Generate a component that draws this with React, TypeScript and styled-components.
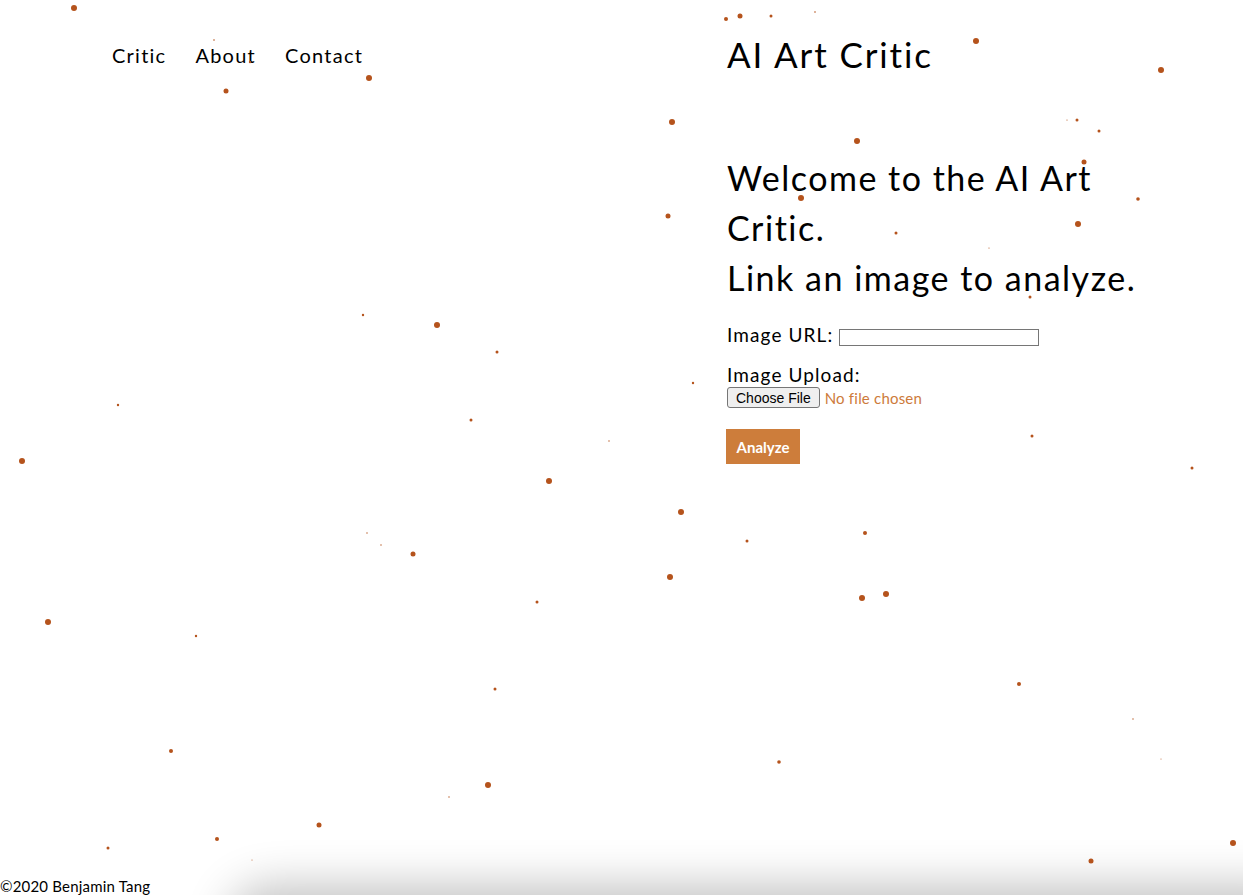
import React, { useState } from "react"
import styled, { createGlobalStyle } from "styled-components"

const GlobalStyle = createGlobalStyle`
    html, body {
        margin: 0;
        padding: 0;
        background: #ffffff;
    }

    body {
        font-family: Lato, "Noto Sans", sans-serif;
        color: #000000;
        overflow: hidden;
    }
`

// particle positions: x, y, radius
const particles: [number, number, number][] = [
    [74, 8, 3], [369, 78, 3], [226, 91, 2.5], [976, 41, 3], [1161, 70, 3], [672, 122, 3],
    [857, 141, 3], [1084, 162, 2.5], [801, 198, 3], [1078, 224, 3], [668, 216, 2.5],
    [437, 325, 3], [22, 461, 3], [549, 481, 3], [681, 512, 3], [670, 577, 3], [862, 598, 3],
    [886, 594, 3], [48, 622, 3], [413, 554, 2.5], [488, 785, 3], [319, 825, 2.5], [1091, 861, 2.5],
    [1233, 843, 3], [740, 16, 2.5], [726, 19, 2], [771, 16, 1.5], [815, 12, 0.8], [214, 40, 0.8],
    [250, 62, 1.2], [1077, 120, 1.5], [1099, 131, 1.5], [1138, 199, 1.8], [896, 233, 1.5],
    [989, 248, 0.6], [1030, 297, 1.5], [363, 315, 1.2], [497, 352, 1.5], [693, 383, 1.2],
    [118, 405, 1.2], [471, 420, 1.5], [609, 441, 0.7], [1032, 436, 1.5], [1192, 468, 1.5],
    [747, 541, 1.5], [865, 533, 2], [367, 533, 0.7], [381, 545, 0.7], [537, 602, 1.5],
    [196, 636, 1.2], [495, 689, 1.5], [1019, 684, 2], [1133, 719, 0.7], [171, 751, 2],
    [779, 762, 1.8], [1161, 759, 0.5], [449, 797, 0.7], [217, 839, 2], [108, 848, 1.5],
    [252, 860, 0.5], [1067, 120, 0.6],
]

function ParticleField(): JSX.Element {
    return (
        <ParticlesSCP viewBox="0 0 1243 895" width="1243" height="895">
            {particles.map(([x, y, r], i) => (
                <circle key={i} cx={x} cy={y} r={r} fill="#b5531c" />
            ))}
        </ParticlesSCP>
    )
}

function App(): JSX.Element {
    const [url, setUrl] = useState<string>('')

    return (
        <PageSCP>
            <GlobalStyle />
            <ParticleField />

            <ColumnsSCP>
                <NavSCP>
                    <NavLinkSCP href="#">Critic</NavLinkSCP>
                    <NavLinkSCP href="#">About</NavLinkSCP>
                    <NavLinkSCP href="#">Contact</NavLinkSCP>
                </NavSCP>

                <MainSCP>
                    <TitleSCP>AI Art Critic</TitleSCP>

                    <WelcomeSCP>
                        Welcome to the AI Art Critic.<br />
                        Link an image to analyze.
                    </WelcomeSCP>

                    <FormSCP onSubmit={(event) => event.preventDefault()}>
                        <div className="input-block inline">
                            <label htmlFor="url">Image URL:</label>
                            <input id="url" value={url} onChange={(event) => setUrl(event.target.value)} />
                        </div>

                        <div className="input-block">
                            <label htmlFor="upload">Image Upload:</label>
                            <FileRowSCP>
                                <FileButtonSCP type="button">Choose File</FileButtonSCP>
                                <span>No file chosen</span>
                            </FileRowSCP>
                        </div>

                        <AnalyzeButtonSCP type="submit">Analyze</AnalyzeButtonSCP>
                    </FormSCP>
                </MainSCP>
            </ColumnsSCP>

            <FooterSCP>
                <span>©2020 Benjamin Tang</span>
                <ShadeSCP />
            </FooterSCP>
        </PageSCP>
    )
}

export default App

const PageSCP = styled.div`
    position: relative;
    min-height: 895px;
    display: flex;
    flex-direction: column;
    overflow: hidden;
`

const ParticlesSCP = styled.svg`
    position: absolute;
    left: 0;
    top: 0;
    pointer-events: none;
    z-index: 2;
`

const ColumnsSCP = styled.div`
    flex: 1;
    display: grid;
    grid-template-columns: 727px 1fr;
    position: relative;
    z-index: 1;
`

const NavSCP = styled.nav`
    display: flex;
    gap: 29px;
    padding: 43px 0 0 112px;
    align-items: flex-start;
`

const NavLinkSCP = styled.a`
    color: #000000;
    text-decoration: none;
    font-size: 20px;
    letter-spacing: 1.25px;
    line-height: 24px;
`

const MainSCP = styled.main`
    display: flex;
    flex-direction: column;
    padding-top: 33px;
`

const TitleSCP = styled.h1`
    margin: 0;
    font-size: 35px;
    font-weight: 400;
    letter-spacing: 1.9px;
    line-height: 43px;
`

const WelcomeSCP = styled.h2`
    margin: 77px 0 0 0;
    width: 425px;
    font-size: 34px;
    font-weight: 400;
    line-height: 50px;
    letter-spacing: 1.5px;
`

const FormSCP = styled.form`
    margin-top: 20px;
    display: flex;
    flex-direction: column;
    align-items: flex-start;

    .input-block {
        display: flex;
        flex-direction: column;
        align-items: flex-start;
        margin-bottom: 16px;
    }

    .input-block.inline {
        flex-direction: row;
        align-items: center;
        gap: 6px;
    }

    .input-block label {
        font-size: 19px;
        line-height: 24px;
        letter-spacing: 1.1px;
    }

    .input-block.inline input {
        width: 196px;
        height: 13px;
        margin-top: 4px;
        padding: 1px;
        border: 1px solid #767676;
        outline: none;
    }
`

const FileRowSCP = styled.div`
    display: flex;
    align-items: center;
    gap: 5px;

    span {
        color: #cd7a3a;
        font-size: 15px;
        letter-spacing: 0.2px;
    }
`

const FileButtonSCP = styled.button`
    height: 21px;
    padding: 0 8px;
    font-family: "Liberation Sans", Arial, sans-serif;
    font-size: 14px;
    color: #000000;
    background: #efefef;
    border: 1px solid #767676;
    border-radius: 3px;
`

const AnalyzeButtonSCP = styled.button`
    margin-top: 5px;
    margin-left: -1px;
    width: 74px;
    height: 35px;
    border: 0;
    background: #cd7d3b;
    color: #ffffff;
    font-family: Lato, "Noto Sans", sans-serif;
    font-size: 15px;
    font-weight: 700;
    cursor: pointer;
`

const FooterSCP = styled.footer`
    position: relative;
    z-index: 1;
    height: 18px;
    font-size: 15px;
    letter-spacing: 0.2px;
    line-height: 18px;
`

const ShadeSCP = styled.div`
    position: absolute;
    left: 240px;
    right: -60px;
    top: 20px;
    height: 60px;
    box-shadow: 0 0 45px 12px rgba(0, 0, 0, 0.24);
    border-radius: 40px;
`
